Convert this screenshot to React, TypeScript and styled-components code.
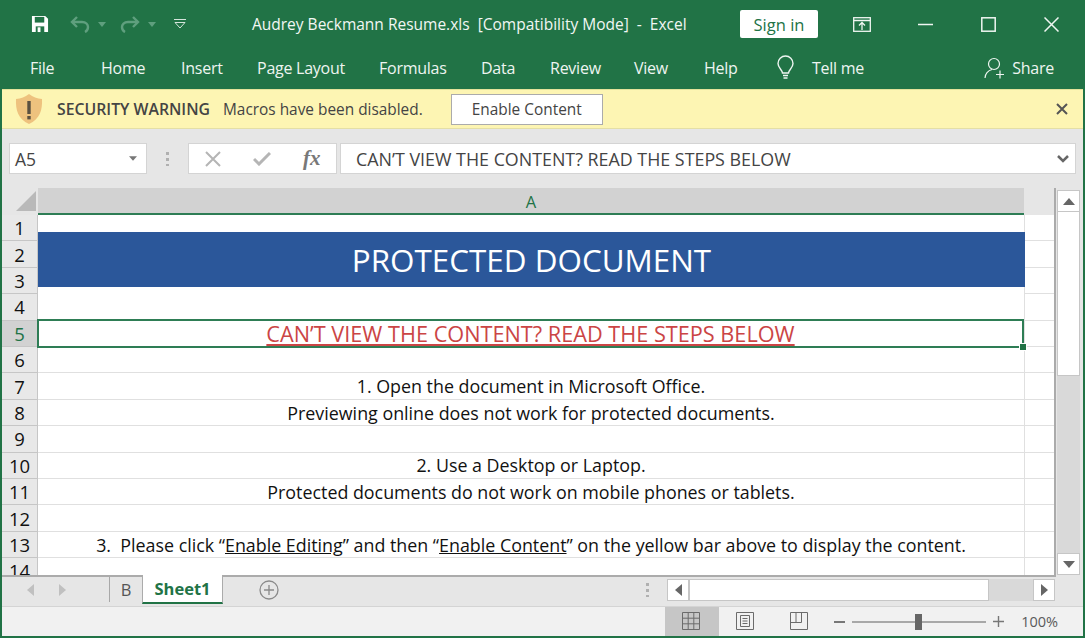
import React from 'react';
import styled, { createGlobalStyle } from 'styled-components';

const Global = createGlobalStyle`
  html, body { margin: 0; padding: 0; background: #fff; overflow: hidden; }
  * { box-sizing: border-box; }
`;

const Window = styled.div`
  width: 1085px;
  height: 638px;
  display: flex;
  flex-direction: column;
  overflow: hidden;
  font-family: "Open Sans", "Noto Sans", sans-serif;
  background: #e6e6e6;
  border: solid #217346;
  border-width: 0 2px 2px 2px;
`;

const TitleBar = styled.div`
  height: 48px;
  flex: none;
  display: flex;
  align-items: center;
  background: #217346;
  color: #fff;
  padding-left: 29px;
`;

const QuickAccess = styled.div`
  width: 221px;
  flex: none;
  display: flex;
  align-items: center;
`;

const QatIcon = styled.svg<{ $gap?: number }>`
  flex: none;
  display: block;
  margin-left: ${(p) => p.$gap ?? 0}px;
`;

const DocTitle = styled.div`
  width: 488px;
  flex: none;
  font-size: 15.5px;
  white-space: pre;
  color: #f2f7f4;
`;

const SignIn = styled.div`
  width: 78px;
  height: 28px;
  flex: none;
  display: flex;
  align-items: center;
  justify-content: center;
  background: #fff;
  border-radius: 2px;
  color: #217346;
  font-size: 16.5px;
`;

const WindowControls = styled.div`
  display: flex;
  align-items: center;
  margin-left: 35px;
`;

const ControlSlot = styled.div<{ $w: number }>`
  width: ${(p) => p.$w}px;
  flex: none;
  display: flex;
  justify-content: flex-start;
`;

const Ribbon = styled.div`
  height: 41px;
  flex: none;
  display: flex;
  align-items: center;
  background: #217346;
  padding: 0 29px 2px 28px;
  color: #eef5f1;
  font-size: 16px;
  letter-spacing: -0.25px;
`;

const RibbonTab = styled.div<{ $w: number }>`
  width: ${(p) => p.$w}px;
  flex: none;
  white-space: nowrap;
`;

const TellIcon = styled.svg`
  flex: none;
  margin: 0 18px 0 5px;
`;

const ShareGroup = styled.div`
  margin-left: auto;
  display: flex;
  align-items: center;
  gap: 7px;
`;

const WarningBar = styled.div`
  height: 40px;
  flex: none;
  display: flex;
  align-items: center;
  background: #fdf5b3;
  border-top: 1px solid #e3e39a;
  border-bottom: 1px solid #e4dfa6;
  padding: 0 15px 0 12px;
  color: #444;
  font-size: 15.4px;
`;

const WarningTitle = styled.span`
  font-weight: 600;
  font-size: 15.8px;
  margin: 0 13px 0 13px;
  white-space: nowrap;
`;

const EnableButton = styled.div`
  width: 152px;
  height: 31px;
  margin-left: 28px;
  display: flex;
  align-items: center;
  justify-content: center;
  background: #fff;
  border: 1px solid #ababab;
  font-size: 15.4px;
  color: #444;
`;

const CloseX = styled.svg`
  margin-left: auto;
`;

const FormulaBar = styled.div`
  height: 59px;
  flex: none;
  display: flex;
  align-items: flex-start;
  padding: 14px 7px 0 7px;
  background: #e6e6e6;
`;

const NameBox = styled.div`
  width: 138px;
  height: 31px;
  flex: none;
  display: flex;
  align-items: center;
  justify-content: space-between;
  padding: 0 9px 0 5px;
  background: #fff;
  border: 1px solid #d4d4d4;
  font-size: 17.5px;
  color: #444;
`;

const Grip = styled.div`
  width: 3px;
  height: 14px;
  flex: none;
  background: repeating-linear-gradient(#b0b0b0 0 3px, transparent 3px 6px);
`;

const GripSlot = styled.div`
  width: 41px;
  height: 31px;
  flex: none;
  display: flex;
  align-items: center;
  justify-content: center;
`;

const FormulaButtons = styled.div`
  width: 149px;
  height: 31px;
  flex: none;
  display: flex;
  align-items: center;
  padding-left: 16px;
  background: #fff;
  border: 1px solid #d4d4d4;
`;

const CheckIcon = styled.svg`
  margin-left: 32px;
`;

const Fx = styled.span`
  font-family: "Liberation Serif", serif;
  font-style: italic;
  font-weight: 700;
  font-size: 21px;
  margin-left: 32px;
  color: #787878;
`;

const FormulaInput = styled.div`
  flex: 1;
  height: 31px;
  margin-left: 3px;
  display: flex;
  align-items: center;
  justify-content: space-between;
  padding: 0 6px 0 15px;
  background: #fff;
  border: 1px solid #d4d4d4;
  font-size: 17.85px;
  color: #444;
  white-space: nowrap;
`;

const SheetArea = styled.div`
  flex: 1;
  min-height: 0;
  display: flex;
  background: #e6e6e6;
`;

const Sheet = styled.div`
  width: 1054px;
  flex: none;
  display: flex;
  flex-direction: column;
  overflow: hidden;
  border-right: 2px solid #ababab;
`;

const ColumnHead = styled.div`
  height: 27px;
  flex: none;
  display: grid;
  grid-template-columns: 36px 986px;
`;

const Corner = styled.div`
  display: flex;
  align-items: flex-end;
  justify-content: flex-end;
  padding: 0 2px 4px 0;
`;

const ColumnLabel = styled.div`
  display: flex;
  align-items: center;
  justify-content: center;
  padding-top: 2px;
  background: #d2d2d2;
  border-bottom: 2px solid #2e7d55;
  color: #217346;
  font-size: 16.5px;
`;

const Cells = styled.div`
  flex: 1;
  min-height: 0;
  display: grid;
  grid-template-columns: 36px 986px 30px;
  grid-auto-rows: 26.42px;
  background: #fff;
`;

const RowHead = styled.div<{ $active?: boolean }>`
  display: flex;
  align-items: center;
  justify-content: center;
  background: ${(p) => (p.$active ? '#d2d2d2' : '#e8e8e8')};
  color: ${(p) => (p.$active ? '#217346' : '#111')};
  border-bottom: 1px solid #c6c6c6;
  border-right: 1px solid #c6c6c6;
  font-size: 18.5px;
`;

const Cell = styled.div`
  display: flex;
  align-items: center;
  justify-content: center;
  border-bottom: 1px solid #e0e0e0;
  font-size: 17.85px;
  color: #111;
  white-space: pre;
`;

const SideCell = styled.div`
  border-bottom: 1px solid #e0e0e0;
  border-left: 1px solid #e0e0e0;
`;

/* the banner is a shape that sits over rows 1-3, so it starts above row 2 */
const Banner = styled.div`
  grid-row: span 2;
  position: relative;
  margin: -9px -1px 0 0;
  height: 55px;
  display: flex;
  align-items: center;
  justify-content: center;
  background: #2b579a;
  color: #fff;
  font-size: 31.4px;
`;

const SelectedCell = styled(Cell)`
  position: relative;
  margin: -2px 0 -1px -1px;
  border: 2px solid #2e7d55;
  color: #cb4545;
  font-size: 21.7px;
  text-decoration: underline;
`;

const FillHandle = styled.div`
  position: absolute;
  right: -5px;
  bottom: -5px;
  width: 8px;
  height: 8px;
  background: #217346;
  border: 1px solid #fff;
`;

const Underlined = styled.span`
  text-decoration: underline;
`;

const VScroll = styled.div`
  width: 23px;
  margin: 2px 0 0 1px;
  display: flex;
  flex-direction: column;
  flex: none;
  background: #d9d9d9;
  overflow: hidden;
`;

const ScrollButton = styled.div<{ $w?: number }>`
  width: ${(p) => p.$w ?? 23}px;
  height: 22px;
  flex: none;
  display: flex;
  align-items: center;
  justify-content: center;
  background: #fff;
  border: 1px solid #c6c6c6;
`;

const VThumb = styled.div`
  height: 164px;
  flex: none;
  background: #fff;
  border: 1px solid #c6c6c6;
  border-top: 0;
`;

const VTrack = styled.div`
  flex: 1;
`;

const TabBar = styled.div`
  height: 31px;
  flex: none;
  display: flex;
  align-items: flex-start;
  background: #e6e6e6;
  border-top: 2px solid #ababab;
  margin-right: 27px;
  padding-left: 25px;
`;

const TabNav = styled.div`
  width: 83px;
  height: 25px;
  flex: none;
  display: flex;
  align-items: center;
  gap: 25px;
  border-right: 1px solid #a8a8a8;
`;

const SheetTabB = styled.div`
  width: 32px;
  height: 25px;
  flex: none;
  display: flex;
  align-items: center;
  justify-content: center;
  color: #555;
  font-size: 16.5px;
`;

const SheetTab = styled.div`
  width: 81px;
  height: 29px;
  flex: none;
  margin-top: -2px;
  display: flex;
  align-items: center;
  justify-content: center;
  background: #fff;
  color: #217346;
  font-weight: 700;
  font-size: 16.5px;
  border-bottom: 2px solid #217346;
  border-left: 1px solid #ababab;
  border-right: 1px solid #ababab;
`;

const PlusSlot = styled.div`
  width: 423px;
  flex: none;
  padding: 3px 0 0 36px;
`;

const HScroll = styled.div`
  width: 388px;
  height: 22px;
  margin-top: 2px;
  flex: none;
  display: flex;
  align-items: center;
  background: #d9d9d9;
`;

const HThumb = styled.div`
  width: 300px;
  height: 22px;
  flex: none;
  background: #fff;
  border: 1px solid #c6c6c6;
`;

const HTrack = styled.div`
  flex: 1;
`;

const HDots = styled.div`
  width: 21px;
  height: 22px;
  flex: none;
  margin-top: 2px;
  display: flex;
  align-items: center;
`;

const StatusBar = styled.div`
  height: 30px;
  flex: none;
  display: flex;
  align-items: stretch;
  justify-content: flex-end;
  background: #f1f1f1;
  border-top: 1px solid #d4d4d4;
  color: #5a5a5a;
`;

const ViewButton = styled.div<{ $active?: boolean }>`
  width: 54px;
  flex: none;
  display: flex;
  align-items: center;
  justify-content: center;
  padding: 0 3px 1px 0;
  background: ${(p) => (p.$active ? '#c6c6c6' : 'transparent')};
`;

const ZoomGroup = styled.div`
  width: 224px;
  margin: 0 25px 0 7px;
  flex: none;
  display: flex;
  align-items: center;
  font-size: 14.5px;
`;

const SliderTrack = styled.div`
  position: relative;
  width: 134px;
  height: 2px;
  margin: 0 7px;
  flex: none;
  background: #a8a8a8;
`;

const SliderThumb = styled.div`
  position: absolute;
  left: 63px;
  top: -7px;
  width: 7px;
  height: 16px;
  background: #666;
`;

const ZoomPct = styled.span`
  margin-left: auto;
`;

const Tri = ({ dir, color = '#666', size = 12 }: { dir: 'up' | 'down' | 'left' | 'right'; color?: string; size?: number }) => {
  const pts = {
    up: '0,7 6,0 12,7',
    down: '0,0 12,0 6,7',
    left: '7,0 7,12 0,6',
    right: '0,0 0,12 7,6',
  }[dir];
  const vert = dir === 'up' || dir === 'down';
  const short = Math.round((size * 7) / 12);
  return (
    <svg width={vert ? size : short} height={vert ? short : size} viewBox={vert ? '0 0 12 7' : '0 0 7 12'}>
      <polygon points={pts} fill={color} />
    </svg>
  );
};

const App = () => (
  <Window>
    <Global />
    <TitleBar>
      <QuickAccess>
        <QatIcon width="18" height="18" viewBox="0 0 19 19">
          <path d="M1 1h14l3 3v14H1z" fill="#fff" />
          <rect x="4" y="2" width="10" height="6" fill="#217346" />
          <rect x="5" y="12" width="9" height="6" fill="#217346" />
          <rect x="7" y="13" width="3" height="5" fill="#fff" />
        </QatIcon>
        <QatIcon $gap={21} width="20" height="17" viewBox="0 0 20 17" fill="none" stroke="#5f9f7e" strokeWidth="2.4">
          <path d="M7 1 2 6l5 5" />
          <path d="M2 6h10c4 0 6 2.5 6 5s-1 4-3 5" />
        </QatIcon>
        <QatIcon $gap={8} width="8" height="5" viewBox="0 0 8 5">
          <polygon points="0,0 8,0 4,5" fill="#5f9f7e" />
        </QatIcon>
        <QatIcon $gap={14} width="20" height="17" viewBox="0 0 20 17" fill="none" stroke="#5f9f7e" strokeWidth="2.4">
          <path d="m13 1 5 5-5 5" />
          <path d="M18 6H8C4 6 2 8.500 2 11s1 4 3 5" />
        </QatIcon>
        <QatIcon $gap={8} width="8" height="5" viewBox="0 0 8 5">
          <polygon points="0,0 8,0 4,5" fill="#5f9f7e" />
        </QatIcon>
        <QatIcon $gap={18} width="12" height="10" viewBox="0 0 12 10" fill="none" stroke="#d5e5dc" strokeWidth="1">
          <path d="M0 .5h12M1 3.500h10L6 9z" />
        </QatIcon>
      </QuickAccess>
      <DocTitle>Audrey Beckmann Resume.xls  [Compatibility Mode]  -  Excel</DocTitle>
      <SignIn>Sign in</SignIn>
      <WindowControls>
        <ControlSlot $w={65}>
          <svg width="18" height="15" viewBox="0 0 18 15" fill="none" stroke="#f0f6f2" strokeWidth="1.300">
            <rect x=".7" y=".7" width="16.600" height="13.600" />
            <path d="M.7 3.500h16.600M9 13V6M6 8.500 9 5.500l3 3" />
          </svg>
        </ControlSlot>
        <ControlSlot $w={63}>
          <svg width="15" height="15" viewBox="0 0 15 15" stroke="#f0f6f2" strokeWidth="1.500">
            <path d="M0 7.500h15" />
          </svg>
        </ControlSlot>
        <ControlSlot $w={63}>
          <svg width="15" height="15" viewBox="0 0 15 15" fill="none" stroke="#f0f6f2" strokeWidth="1.500">
            <rect x=".8" y=".8" width="13.400" height="13.400" />
          </svg>
        </ControlSlot>
        <ControlSlot $w={20}>
          <svg width="15" height="15" viewBox="0 0 15 15" stroke="#f0f6f2" strokeWidth="1.500">
            <path d="m.5.500 14 14M14.500.500l-14 14" />
          </svg>
        </ControlSlot>
      </WindowControls>
    </TitleBar>

    <Ribbon>
      <RibbonTab $w={71}>File</RibbonTab>
      <RibbonTab $w={80}>Home</RibbonTab>
      <RibbonTab $w={76}>Insert</RibbonTab>
      <RibbonTab $w={122}>Page Layout</RibbonTab>
      <RibbonTab $w={102}>Formulas</RibbonTab>
      <RibbonTab $w={69}>Data</RibbonTab>
      <RibbonTab $w={84}>Review</RibbonTab>
      <RibbonTab $w={70}>View</RibbonTab>
      <RibbonTab $w={68}>Help</RibbonTab>
      <TellIcon width="17" height="26" viewBox="0 0 17 26" fill="none" stroke="#eef5f1" strokeWidth="1.400">
        <path d="M5.500 18c0-3-4.500-5-4.500-9.500a7.500 7.500 0 0 1 15 0c0 4.500-4.500 6.500-4.500 9.500z" />
        <path d="M6 20.500h5M6.500 23h4" />
      </TellIcon>
      <RibbonTab $w={60}>Tell me</RibbonTab>
      <ShareGroup>
        <svg width="21" height="22" viewBox="0 0 21 22" fill="none" stroke="#eef5f1" strokeWidth="1.200">
          <circle cx="10" cy="7" r="5.500" />
          <path d="M1 21c0-4 3-7.500 7-8.500M12 17.500h8M16 13.500v8" />
        </svg>
        <span>Share</span>
      </ShareGroup>
    </Ribbon>

    <WarningBar>
      <svg width="30" height="32" viewBox="0 0 30 32">
        <path d="M15 1c4 3 8 4.500 13 5 .5 11-2 20-13 25C4 26 1.500 17 2 6c5-.5 9-2 13-5z" fill="#eec27e" />
        <rect x="13.300" y="8" width="3.400" height="13" fill="#5a5040" />
        <rect x="13.300" y="23" width="3.400" height="3.400" fill="#5a5040" />
      </svg>
      <WarningTitle>SECURITY WARNING</WarningTitle>
      <span>Macros have been disabled.</span>
      <EnableButton>Enable Content</EnableButton>
      <CloseX width="12" height="12" viewBox="0 0 12 12" stroke="#555" strokeWidth="2">
        <path d="m1 1 10 10M11 1 1 11" />
      </CloseX>
    </WarningBar>

    <FormulaBar>
      <NameBox>
        <span>A5</span>
        <Tri dir="down" color="#777" size={8} />
      </NameBox>
      <GripSlot>
        <Grip />
      </GripSlot>
      <FormulaButtons>
        <svg width="16" height="16" viewBox="0 0 16 16" stroke="#b5b5b5" strokeWidth="2">
          <path d="m1 1 14 14M15 1 1 15" />
        </svg>
        <CheckIcon width="18" height="14" viewBox="0 0 18 14" fill="none" stroke="#b5b5b5" strokeWidth="3">
          <path d="m1 7 5 5L17 1" />
        </CheckIcon>
        <Fx>fx</Fx>
      </FormulaButtons>
      <FormulaInput>
        <span>CAN’T VIEW THE CONTENT? READ THE STEPS BELOW</span>
        <svg width="12" height="8" viewBox="0 0 12 8" fill="none" stroke="#666" strokeWidth="2.500">
          <path d="m1 1 5 5 5-5" />
        </svg>
      </FormulaInput>
    </FormulaBar>

    <SheetArea>
      <Sheet>
        <ColumnHead>
          <Corner>
            <svg width="20" height="20" viewBox="0 0 20 20">
              <polygon points="20,0 20,20 0,20" fill="#b9b9b9" />
            </svg>
          </Corner>
          <ColumnLabel>A</ColumnLabel>
        </ColumnHead>
        <Cells>
          <RowHead>1</RowHead><Cell /><SideCell />
          <RowHead>2</RowHead><Banner>PROTECTED DOCUMENT</Banner><SideCell />
          <RowHead>3</RowHead><SideCell />
          <RowHead>4</RowHead><Cell /><SideCell />
          <RowHead $active>5</RowHead>
          <SelectedCell>CAN’T VIEW THE CONTENT? READ THE STEPS BELOW<FillHandle /></SelectedCell>
          <SideCell />
          <RowHead>6</RowHead><Cell /><SideCell />
          <RowHead>7</RowHead><Cell>1. Open the document in Microsoft Office.</Cell><SideCell />
          <RowHead>8</RowHead><Cell>Previewing online does not work for protected documents.</Cell><SideCell />
          <RowHead>9</RowHead><Cell /><SideCell />
          <RowHead>10</RowHead><Cell>2. Use a Desktop or Laptop.</Cell><SideCell />
          <RowHead>11</RowHead><Cell>Protected documents do not work on mobile phones or tablets.</Cell><SideCell />
          <RowHead>12</RowHead><Cell /><SideCell />
          <RowHead>13</RowHead>
          <Cell>3.  Please click “<Underlined>Enable Editing</Underlined>” and then “<Underlined>Enable Content</Underlined>” on the yellow bar above to display the content.</Cell>
          <SideCell />
          <RowHead>14</RowHead><Cell /><SideCell />
        </Cells>
      </Sheet>
      <VScroll>
        <ScrollButton><Tri dir="up" /></ScrollButton>
        <VThumb />
        <VTrack />
        <ScrollButton><Tri dir="down" /></ScrollButton>
      </VScroll>
    </SheetArea>

    <TabBar>
      <TabNav>
        <Tri dir="left" color="#c0c0c0" />
        <Tri dir="right" color="#c0c0c0" />
      </TabNav>
      <SheetTabB>B</SheetTabB>
      <SheetTab>Sheet1</SheetTab>
      <PlusSlot>
        <svg width="20" height="20" viewBox="0 0 20 20" fill="none" stroke="#8a8a8a" strokeWidth="1.300">
          <circle cx="10" cy="10" r="9" />
          <path d="M10 5v10M5 10h10" />
        </svg>
      </PlusSlot>
      <HDots><Grip /></HDots>
      <HScroll>
        <ScrollButton $w={22}><Tri dir="left" /></ScrollButton>
        <HThumb />
        <HTrack />
        <ScrollButton $w={22}><Tri dir="right" /></ScrollButton>
      </HScroll>
    </TabBar>

    <StatusBar>
      <ViewButton $active>
        <svg width="18" height="18" viewBox="0 0 18 18" fill="none" stroke="#6b6b6b" strokeWidth="1">
          <path d="M.5.500h17v17H.5zM.5 6.200h17M.5 11.800h17M6.200.500v17M11.800.500v17" />
        </svg>
      </ViewButton>
      <ViewButton>
        <svg width="18" height="18" viewBox="0 0 18 18" fill="none" stroke="#6b6b6b" strokeWidth="1">
          <path d="M.5.500h17v17H.5zM4.500 3.500h9v11h-9zM6.500 6.500h5M6.500 9h5M6.500 11.500h5" />
        </svg>
      </ViewButton>
      <ViewButton>
        <svg width="18" height="18" viewBox="0 0 18 18" fill="none" stroke="#6b6b6b" strokeWidth="1">
          <path d="M.5.500h17v17H.5zM.5 10.500h11V.500M6 .500v10" />
        </svg>
      </ViewButton>
      <ZoomGroup>
        <svg width="11" height="2" viewBox="0 0 11 2"><rect width="11" height="2" fill="#777" /></svg>
        <SliderTrack><SliderThumb /></SliderTrack>
        <svg width="11" height="11" viewBox="0 0 11 11" stroke="#777" strokeWidth="1.400"><path d="M0 5.500h11M5.500 0v11" /></svg>
        <ZoomPct>100%</ZoomPct>
      </ZoomGroup>
    </StatusBar>
  </Window>
);

export default App;
